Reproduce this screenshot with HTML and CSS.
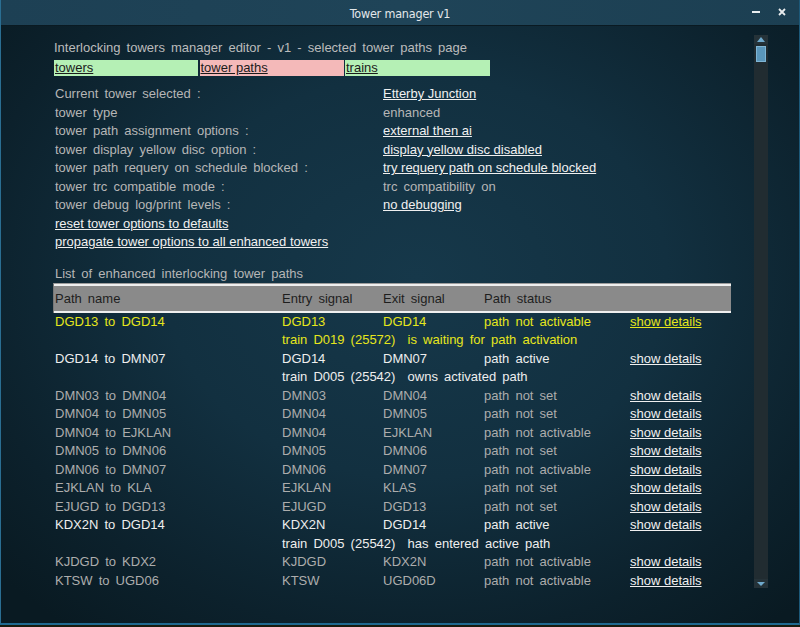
FILE: index.html
```html
<!DOCTYPE html>
<html>
<head>
<meta charset="utf-8">
<title>Tower manager v1</title>
<link rel="stylesheet" href="styles.css">
</head>
<body>
<div class="window">
  <div class="titlebar">
    <span></span>
    <span class="title">Tower manager v1</span>
    <div class="controls">
      <svg class="ctl" width="8" height="8" viewBox="0 0 8 8"><rect x="0" y="3" width="8" height="2" fill="#e8ecee"/></svg>
      <svg class="ctl" width="8" height="8" viewBox="0 0 8 8"><path d="M1 1 L7 7 M7 1 L1 7" stroke="#e8ecee" stroke-width="1.8"/></svg>
    </div>
  </div>
  <div class="main">
    <div class="content">
      <div class="heading plain">Interlocking towers manager editor - v1 - selected tower paths page</div>
      <div class="tabs">
        <a class="tab green">towers</a>
        <a class="tab pink">tower paths</a>
        <a class="tab green">trains</a>
      </div>
      <div class="settings">
        <span class="label">Current tower selected :</span><a class="val">Etterby Junction</a>
        <span class="label">tower type</span><span class="label">enhanced</span>
        <span class="label">tower path assignment options :</span><a class="val">external then ai</a>
        <span class="label">tower display yellow disc option :</span><a class="val">display yellow disc disabled</a>
        <span class="label">tower path requery on schedule blocked :</span><a class="val">try requery path on schedule blocked</a>
        <span class="label">tower trc compatible mode :</span><span class="label">trc compatibility on</span>
        <span class="label">tower debug log/print levels :</span><a class="val">no debugging</a>
        <a class="val wide">reset tower options to defaults</a>
        <a class="val wide">propagate tower options to all enhanced towers</a>
      </div>
      <div class="listtitle plain">List of enhanced interlocking tower paths</div>
      <div class="thead cols">
        <span>Path name</span><span>Entry signal</span><span>Exit signal</span><span>Path status</span><span></span>
      </div>
      <div class="rows">
        <div class="row cols yellow"><span>DGD13 to DGD14</span><span>DGD13</span><span>DGD14</span><span>path not activable</span><a class="det">show details</a></div>
        <div class="row cols yellow"><span class="note">train D019 (25572) &nbsp;is waiting for path activation</span></div>
        <div class="row cols white"><span>DGD14 to DMN07</span><span>DGD14</span><span>DMN07</span><span>path active</span><a class="det">show details</a></div>
        <div class="row cols white"><span class="note">train D005 (25542) &nbsp;owns activated path</span></div>
        <div class="row cols grey"><span>DMN03 to DMN04</span><span>DMN03</span><span>DMN04</span><span>path not set</span><a class="det">show details</a></div>
        <div class="row cols grey"><span>DMN04 to DMN05</span><span>DMN04</span><span>DMN05</span><span>path not set</span><a class="det">show details</a></div>
        <div class="row cols grey"><span>DMN04 to EJKLAN</span><span>DMN04</span><span>EJKLAN</span><span>path not activable</span><a class="det">show details</a></div>
        <div class="row cols grey"><span>DMN05 to DMN06</span><span>DMN05</span><span>DMN06</span><span>path not set</span><a class="det">show details</a></div>
        <div class="row cols grey"><span>DMN06 to DMN07</span><span>DMN06</span><span>DMN07</span><span>path not activable</span><a class="det">show details</a></div>
        <div class="row cols grey"><span>EJKLAN to KLA</span><span>EJKLAN</span><span>KLAS</span><span>path not set</span><a class="det">show details</a></div>
        <div class="row cols grey"><span>EJUGD to DGD13</span><span>EJUGD</span><span>DGD13</span><span>path not set</span><a class="det">show details</a></div>
        <div class="row cols white"><span>KDX2N to DGD14</span><span>KDX2N</span><span>DGD14</span><span>path active</span><a class="det">show details</a></div>
        <div class="row cols white"><span class="note">train D005 (25542) &nbsp;has entered active path</span></div>
        <div class="row cols grey"><span>KJDGD to KDX2</span><span>KJDGD</span><span>KDX2N</span><span>path not activable</span><a class="det">show details</a></div>
        <div class="row cols grey"><span>KTSW to UGD06</span><span>KTSW</span><span>UGD06D</span><span>path not activable</span><a class="det">show details</a></div>
      </div>
    </div>
    <div class="scrollbar">
      <div class="sb-btn"><svg width="8" height="5" viewBox="0 0 8 5"><path d="M0 5 L4 0 L8 5 Z" fill="#6fa9cc"/></svg></div>
      <div class="thumb"></div>
      <div class="sb-space"></div>
      <div class="sb-btn"><svg width="8" height="4" viewBox="0 0 8 4"><path d="M0 0 L8 0 L4 4 Z" fill="#6fa9cc"/></svg></div>
    </div>
  </div>
</div>
</body>
</html>
```
FILE: styles.css
```css
html, body {
  margin: 0;
  padding: 0;
}
body {
  background: #1a1b0e;
  font-family: "Liberation Sans", Arial, sans-serif;
  font-size: 13px;
  width: 800px;
  height: 627px;
  overflow: hidden;
}
.window {
  width: 800px;
  height: 625px;
  box-sizing: border-box;
  border-left: 1px solid #2a6e92;
  border-right: 1px solid #1c5878;
  border-bottom: 2px solid #1f6990;
  display: flex;
  flex-direction: column;
}
.titlebar {
  height: 25px;
  flex: none;
  border-bottom: 1px solid #0a1a22;
  background: linear-gradient(90deg, #1d4054 0%, #1f4458 50%, #1c3f52 100%);
  display: grid;
  grid-template-columns: 1fr auto 1fr;
  align-items: center;
}
.title {
  font-family: "DejaVu Sans Condensed", "Liberation Sans Narrow", sans-serif;
  font-stretch: condensed;
  font-size: 12.5px;
  letter-spacing: -0.2px;
  color: #e2e7ea;
  padding-top: 1px;
}
.controls {
  justify-self: end;
  display: flex;
  align-items: center;
  gap: 18px;
  margin-right: 13px;
  margin-top: -2px;
}
.ctl {
  display: block;
}
.main {
  flex: 1;
  display: flex;
  background:
    radial-gradient(ellipse 70% 75% at 52% 42%, #16384a 0%, #123040 45%, #0c212c 80%, #091a22 100%);
}
.content {
  flex: 1;
  padding: 13px 0 0 52px;
  line-height: 18.5px;
}
.plain, .label, .row span, .thead span {
  word-spacing: 2.5px;
}
.heading {
  padding-left: 1px;
  color: #bcbcbc;
}
.tabs {
  display: grid;
  grid-template-columns: 144px 144px 145px;
  column-gap: 1.5px;
  margin-top: 2.5px;
  padding-left: 1px;
}
.tab {
  height: 16px;
  line-height: 16px;
  color: #1b1b1b;
  text-decoration: underline;
  padding-left: 1px;
}
.green { background: #b5f0b5; }
.pink { background: #f4b9b9; }
.settings {
  margin-top: 9.2px;
  display: grid;
  grid-template-columns: 328px auto;
  padding-left: 2px;
}
.label {
  color: #b6b6b6;
}
.val {
  color: #f0f0f0;
  text-decoration: underline;
}
.wide {
  grid-column: 1 / -1;
}
.listtitle {
  margin-top: 13.4px;
  padding-left: 2px;
  color: #b6b6b6;
}
.cols {
  display: grid;
  grid-template-columns: 227px 101px 101px 146px auto;
}
.thead {
  margin-top: -0.6px;
  width: 678px;
  height: 30px;
  box-sizing: border-box;
  background: #8a8a8a;
  border-top: 1px solid #9c9c9c;
  border-left: 1px solid #787878;
  box-shadow: inset 0 2px 0 #efefef, inset 0 -2px 0 #efefef;
  padding-left: 1px;
  padding-top: 1px;
  align-items: center;
  color: #1e1e1e;
}
.rows {
  padding-left: 2px;
}
.row .note {
  grid-column: 2 / -1;
}
.det {
  text-decoration: underline;
  color: #f0f0f0;
}
.yellow, .yellow .det { color: #e6e61c; }
.white { color: #eeeeee; }
.grey { color: #adadad; }
.scrollbar {
  flex: none;
  width: 14px;
  height: 553px;
  margin-top: 9px;
  margin-right: 31px;
  background: #212c31;
  display: flex;
  flex-direction: column;
  align-items: center;
}
.sb-btn {
  height: 9px;
  width: 14px;
  display: flex;
  align-items: center;
  justify-content: center;
  background: #253238;
}
.thumb {
  margin-top: 2px;
  width: 8px;
  height: 14px;
  background: #5a96ba;
  border: 1px solid #7fb5d4;
}
.sb-space {
  flex: 1;
}
```
